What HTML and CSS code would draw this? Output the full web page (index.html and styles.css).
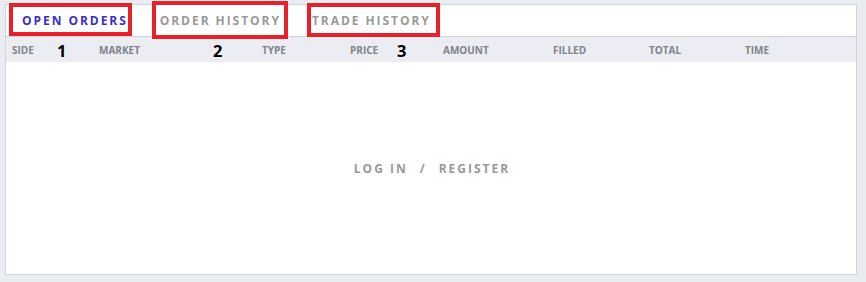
FILE: index.html
```html
<!DOCTYPE html>
<html>
<head>
<meta charset="utf-8">
<link rel="stylesheet" href="styles.css">
</head>
<body>
<div class="panel">
  <div class="tabs">
    <div class="tab active">OPEN ORDERS</div>
    <div class="tab">ORDER HISTORY</div>
    <div class="tab">TRADE HISTORY</div>
  </div>
  <div class="thead">
    <span>SIDE</span>
    <span>MARKET</span>
    <span>TYPE</span>
    <span>PRICE</span>
    <span>AMOUNT</span>
    <span>FILLED</span>
    <span>TOTAL</span>
    <span>TIME</span>
  </div>
  <div class="empty">
    <span class="link">LOG IN</span>
    <span class="sep">/</span>
    <span class="link">REGISTER</span>
  </div>
</div>
<div class="mark box1"></div>
<div class="mark box2"></div>
<div class="mark box3"></div>
<div class="num n1">1</div>
<div class="num n2">2</div>
<div class="num n3">3</div>
</body>
</html>
```

FILE: styles.css
```css
html, body {
  margin: 0;
  padding: 0;
}
body {
  background: #e9ecf0;
  width: 866px;
  height: 282px;
  position: relative;
  overflow: hidden;
  font-family: "Open Sans", "Noto Sans", sans-serif;
}
.panel {
  margin: 4px 9px 0 5px;
  height: 269px;
  background: #ffffff;
  border: 1px solid #d0d3d8;
  display: flex;
  flex-direction: column;
}
.tabs {
  height: 31px;
  border-bottom: 1px solid #d0d3d8;
  display: flex;
  align-items: center;
  padding-left: 16px;
}
.tab {
  font-size: 12px;
  font-weight: 700;
  letter-spacing: 1.95px;
  color: #999999;
  margin-right: 31px;
}
.tab.active {
  color: #3a2fc8;
  margin-right: 32px;
}
.thead {
  height: 25px;
  background: #ebedf2;
  display: grid;
  grid-template-columns: 87px 163px 88px 93px 110px 96px 96px 1fr;
  align-items: center;
  padding-left: 6px;
  font-size: 10px;
  font-weight: 700;
  color: #80828c;
}
.empty {
  flex: 1;
  display: flex;
  align-items: center;
  justify-content: center;
  gap: 12px;
  font-size: 12px;
  font-weight: 700;
  letter-spacing: 2px;
  color: #999999;
  padding-left: 2px;
}
.mark {
  position: absolute;
  border: 4px solid #e8202a;
  box-sizing: border-box;
}
.box1 { left: 9px; top: 3px; width: 123px; height: 33px; }
.box2 { left: 152px; top: 1px; width: 136px; height: 38px; }
.box3 { left: 307px; top: 3px; width: 133px; height: 34px; }
.num {
  position: absolute;
  font-family: "Open Sans", sans-serif;
  font-weight: 700;
  font-size: 16.5px;
  color: #000000;
  line-height: 1;
  top: 43px;
}
.n1 { left: 57px; }
.n2 { left: 213px; }
.n3 { left: 397px; }
```
